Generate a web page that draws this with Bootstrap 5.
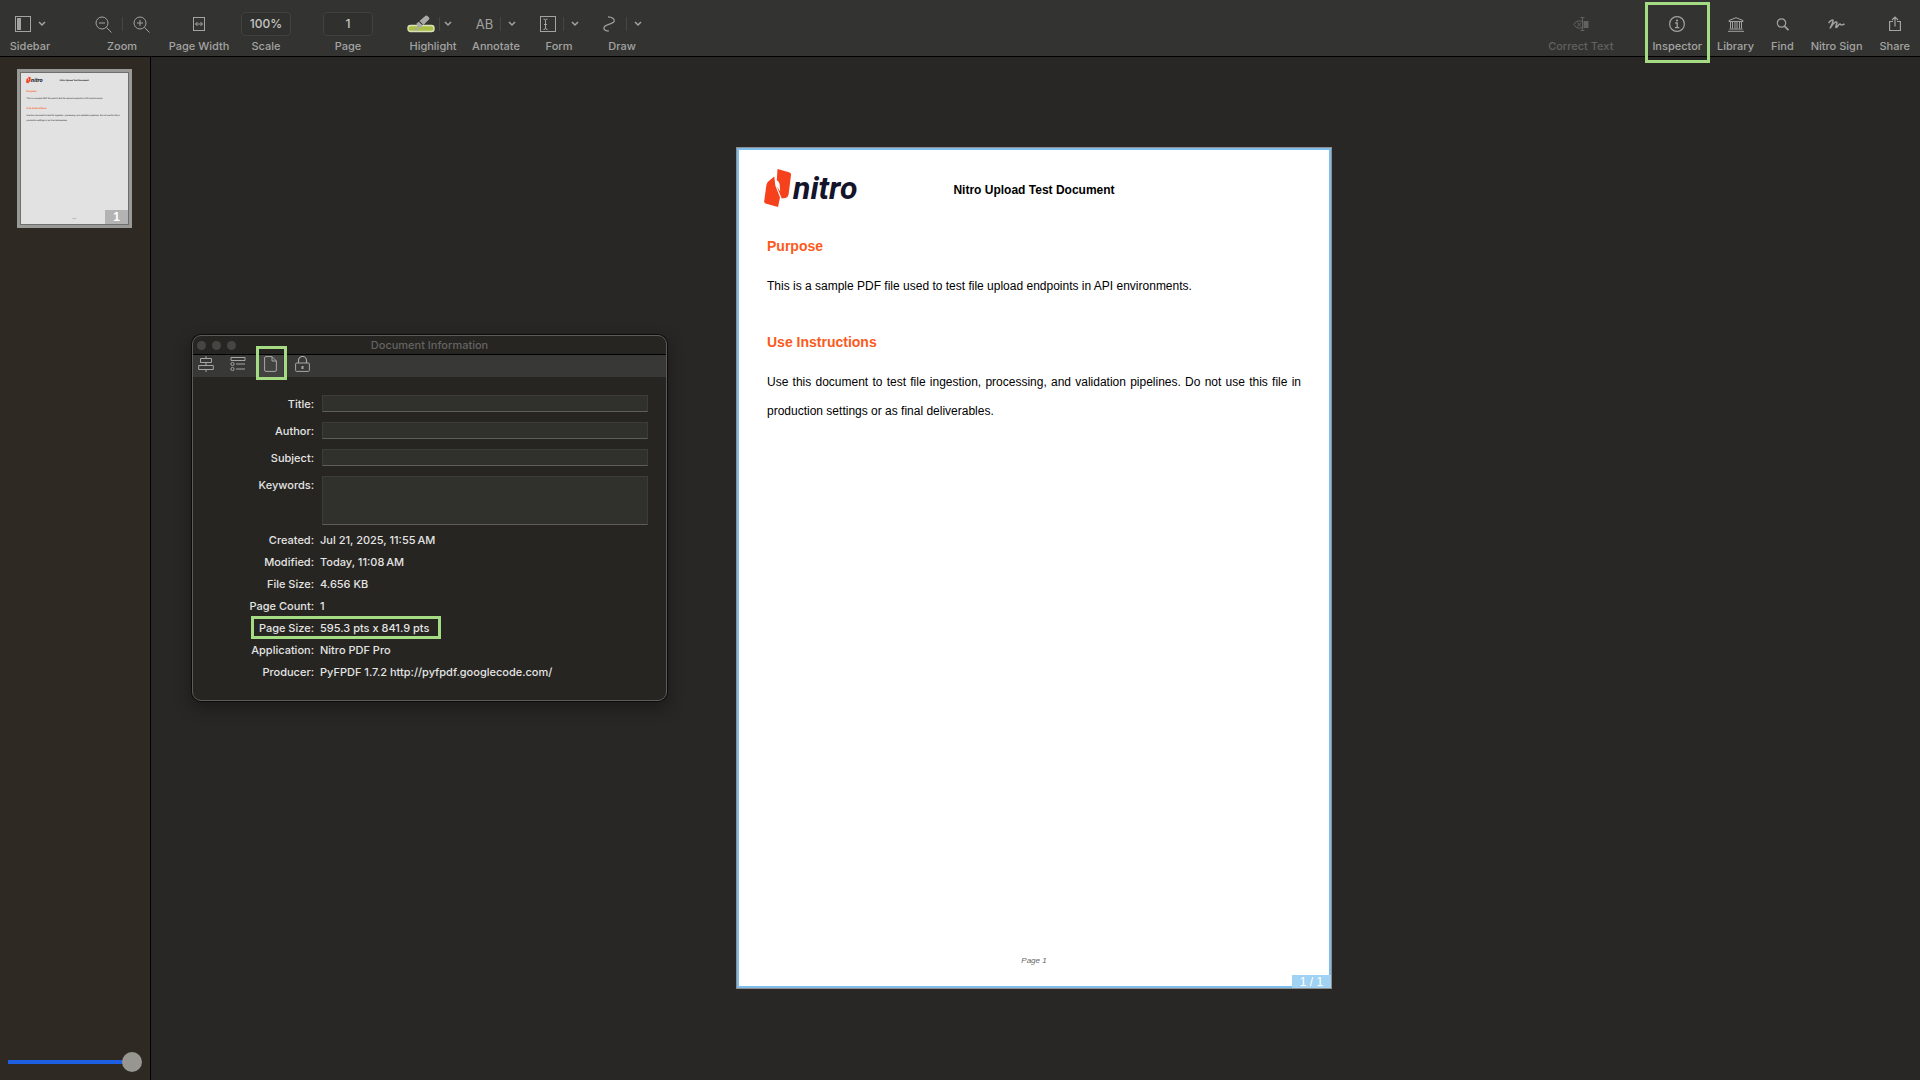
<!DOCTYPE html>
<html lang="en">
<head>
<meta charset="utf-8">
<meta name="viewport" content="width=device-width, initial-scale=1">
<title>Nitro PDF Pro</title>
<link href="https://cdn.jsdelivr.net/npm/bootstrap@5.3.0/dist/css/bootstrap.min.css" rel="stylesheet">
<style>
  :root { --mark-green: #a5db82; --ink: #a3a3a1; --page-blue: #7cbdeb; }
  body { font-family: Inter, "Noto Sans", sans-serif; font-size: 11px; line-height: 14px; background: #282725; color: #e4e4e2; }
  svg { display: block; fill: none; stroke: currentColor; }
  button { font: inherit; color: inherit; background: none; border: 0; padding: 0; }

  /* top toolbar */
  .topbar { height: 57px; background: #333331; border-bottom: 1px solid #000; color: var(--ink); font-weight: 500; padding-right: 10px; }
  .tool { display: flex; flex-direction: column; align-items: center; width: 60px; padding-top: 12px; white-space: nowrap; }
  .tool-face { display: flex; align-items: center; justify-content: center; height: 24px; gap: 7px; margin-bottom: 3px; }
  .tool-face .rule { width: 1px; height: 14px; background: #464644; }
  .tool-group { gap: 3px; }
  .tool-actions { gap: 17px; }
  .tool-sidebar { width: 60px; margin-right: 32px; }
  .tool-zoom { margin-right: 17px; }
  .tool-fit { margin-right: 7px; }
  .tool-scale { margin-right: 22px; }
  .tool-page { margin-right: 25px; }
  .tool-box { width: 50px; height: 24px; background: #30302e; border: 1px solid #41413f; border-radius: 4px; color: #c6c6c4; font-size: 12px; font-weight: 500; text-align: center; padding: 0 0 2px; }
  .ab { font-size: 13px; font-weight: 400; }
  .side { width: auto; }
  .off { color: #61615f; margin-right: 22px; }
  .marked { position: relative; }
  .marked::after { content: ""; position: absolute; border: 3px solid var(--mark-green); pointer-events: none; }
  .tool.marked { margin-right: -2px; }
  .tool.marked::after { inset: 2px -8px -7px -7px; }

  /* thumbnails */
  .thumbs { width: 151px; background: #2e2923; border-right: 1px solid #000; padding: 12px 8px 8px 17px; }
  .thumb { position: relative; width: 115px; border: 3px solid #999a98; background: #e2e2e2; }
  .thumb svg { width: 100%; border: 1px solid #6f6f6d; stroke: none; text-rendering: geometricPrecision; }
  .thumb-no { position: absolute; right: 1px; bottom: 1px; width: 23px; height: 14px; background: #b3b3b3; color: #fff; font: bold 12px/14px "Liberation Sans", Arial, sans-serif; }
  .size-slider { appearance: none; display: block; width: 134px; height: 20px; margin-left: -9px; background: linear-gradient(#1d5fe0, #1d5fe0) 0 50% / calc(100% - 10px) 4px no-repeat; border-radius: 2px; }
  .size-slider::-webkit-slider-thumb { appearance: none; width: 20px; height: 20px; border-radius: 50%; background: #989691; }

  /* document page */
  .canvas { position: relative; padding: 0 3px 2px 0; }
  .sheet { position: relative; display: flex; flex-direction: column; width: 596px; aspect-ratio: 596 / 842; background: #fff; border: 3px solid var(--page-blue); outline: 1px solid #8f8d8b; outline-offset: -1px; color: #000; font-family: "Liberation Sans", Arial, sans-serif; font-size: 12px; padding: 19px 28px 17px; }
  .sheet-head { display: grid; grid-template-columns: 1fr auto 1fr; height: 42px; align-items: center; }
  .brand { align-self: start; width: 97px; height: 38px; margin-left: -3px; stroke: none; }
  .brand text, .thumb .wordmark { font: italic bold 32px Roboto, sans-serif; fill: #14142a; }
  .sheet h1 { font-size: 12px; line-height: 20px; font-weight: bold; margin: 0; }
  .sheet h2 { font-size: 14px; line-height: 20px; font-weight: bold; color: #fb5a1c; margin: 25px 0 16px; }
  .sheet p { line-height: 29px; margin: 0; text-align: justify; }
  .sheet p + h2 { margin-top: 31px; }
  .folio { font-size: 8px; font-style: italic; line-height: 16px; color: #666; text-align: center; }
  .page-tag { position: absolute; right: -2px; bottom: -2px; width: 39px; height: 13px; background: #a0d2f3; color: #fff; font-size: 12px; line-height: 14px; text-align: center; }

  /* document information window */
  .info-window { position: absolute; left: 41px; top: 278px; width: 475px; background: #262522; border: 1px solid #5d5c5a; border-radius: 9px; box-shadow: 0 0 0 1px #0c0c0b, 0 6px 16px 2px rgba(0,0,0,.3); padding-bottom: 17px; }
  .info-title { position: relative; height: 19px; border-bottom: 1px solid #000; color: #646361; padding-left: 4px; }
  .info-title h2 { font-size: 11px; line-height: 18px; font-weight: 500; margin: 0; position: absolute; inset: 0; text-align: center; }
  .dot { width: 9px; height: 9px; border-radius: 50%; background: #464543; margin-right: 6px; }
  .info-tabs { height: 22px; background: #383837; color: #a6a6a4; gap: 6px; margin-bottom: 18px; }
  .tab-btn { width: 26px; height: 22px; display: flex; justify-content: center; padding-top: 1px; }
  .tab-btn.marked { background: #424241; }
  .tab-btn.marked::after { inset: -9px -4px -3px -1px; }
  .info-row { display: flex; font-weight: 500; }
  .info-row > :first-child { width: 121px; text-align: right; flex: none; line-height: 18px; font-weight: 500; }
  .info-row .field { flex: 1; margin: 0 18px 10px 8px; height: 17px; background: #30302d; border: 1px solid #3c3c39; border-bottom-color: #5d5d5a; border-radius: 0; color: #e4e4e2; padding: 0 4px; resize: none; min-width: 0; }
  .info-row .field.tall { height: 49px; margin-bottom: 4px; }
  .facts { margin: 0; }
  .facts .info-row > * { line-height: 22px; margin: 0; }
  .facts dd { padding-left: 6px; }
  .facts .marked::after { left: 58px; width: 190px; top: -1px; bottom: 0; }
</style>
<script src="https://cdn.jsdelivr.net/npm/bootstrap@5.3.0/dist/js/bootstrap.bundle.min.js"></script>
</head>
<body class="vh-100 d-flex flex-column overflow-hidden">

<header class="topbar d-flex flex-shrink-0">
  <button type="button" class="tool tool-sidebar">
    <span class="tool-face">
      <svg width="16" height="16"><rect x=".5" y=".5" width="15" height="15"/><rect x="2" y="2" width="4" height="12" fill="currentColor" stroke="none"/></svg>
      <svg width="8" height="6" stroke-width="1.5"><path d="M1 1l3 3 3-3"/></svg>
    </span>Sidebar
  </button>
  <div class="tool tool-zoom">
    <div class="tool-face gap-0">
      <button type="button" aria-label="Zoom out"><svg width="17" height="17"><circle cx="7" cy="7" r="6"/><path d="M4 7h6M11.5 11.5l5 5"/></svg></button>
      <span class="rule" style="margin:0 10px"></span>
      <button type="button" aria-label="Zoom in"><svg width="17" height="17"><circle cx="7" cy="7" r="6"/><path d="M4 7h6M7 4v6M11.5 11.5l5 5"/></svg></button>
    </div>Zoom
  </div>
  <button type="button" class="tool tool-fit">
    <span class="tool-face"><svg width="12" height="14"><rect x=".5" y=".5" width="11" height="13"/><path d="M2.500 7h7M4.500 5l-2 2 2 2M7.500 5l2 2-2 2"/></svg></span>Page Width
  </button>
  <div class="tool tool-scale">
    <div class="tool-face"><input class="tool-box" id="scale" type="text" value="100%"></div>
    <label for="scale">Scale</label>
  </div>
  <div class="tool tool-page">
    <div class="tool-face"><input class="tool-box" id="pageNo" type="text" value="1"></div>
    <label for="pageNo">Page</label>
  </div>
  <div class="tool-group d-flex">
    <button type="button" class="tool">
      <span class="tool-face gap-1 pe-2">
        <svg width="28" height="18"><rect x="1" y="10.500" width="26" height="6" rx="2.500" fill="#a9bf45" stroke="#dde3b8" stroke-width="1.400"/><path d="M12.500 6L18.500 .8Q19.500 0 20.500 1L22 2.500Q23 3.500 22 4.500L16.500 10zM9.500 8.500l2.300-1.800 4 4L13.500 12.500l-3 .5zM6 15l4-2 2 1-1 1.500z" fill="#a9a9a7" stroke="none"/></svg>
        <span class="rule"></span>
        <svg width="8" height="6" stroke-width="1.5"><path d="M1 1l3 3 3-3"/></svg>
      </span>Highlight
    </button>
    <button type="button" class="tool">
      <span class="tool-face"><span class="ab">AB</span><span class="rule"></span><svg width="8" height="6" stroke-width="1.5"><path d="M1 1l3 3 3-3"/></svg></span>Annotate
    </button>
    <button type="button" class="tool">
      <span class="tool-face"><svg width="16" height="16"><rect x=".5" y=".5" width="15" height="15"/><path d="M3.500 3Q5.500 3 5.500 4.500Q5.500 3 7.500 3M5.500 4v8M3.500 13.500Q5.500 13.500 5.500 12Q5.500 13.500 7.500 13.500M4 8.500h3"/></svg><span class="rule"></span><svg width="8" height="6" stroke-width="1.5"><path d="M1 1l3 3 3-3"/></svg></span>Form
    </button>
    <button type="button" class="tool">
      <span class="tool-face"><svg width="12" height="16"><path d="M5 .8C9 .8 12 3 11 5.500C10 8 2 8.500 1 11.500C.5 14 3 15 6 15" stroke-width="1.200"/></svg><span class="rule ms-1"></span><svg width="8" height="6" stroke-width="1.5"><path d="M1 1l3 3 3-3"/></svg></span>Draw
    </button>
  </div>

  <div class="tool-actions d-flex ms-auto">
    <button type="button" class="tool side off" disabled>
      <span class="tool-face"><svg width="16" height="14"><path d="M9 4H4L.700 7.500 4 11h5M4.500 5.500l3.500 4M8 5.500l-3.500 4M9.500 1v12M7.500 .5h4M7.500 13.500h4"/><rect x="10.500" y="4" width="5" height="7" fill="currentColor" stroke="none"/></svg></span>Correct Text
    </button>
    <button type="button" class="tool side marked">
      <span class="tool-face"><svg width="16" height="16"><circle cx="8" cy="8" r="7.400" stroke-width="1.200"/><circle cx="8" cy="4.500" r="1.100" fill="currentColor" stroke="none"/><path d="M6.300 7h1.900v4.500M6 11.600h4.300" stroke-width="1.300"/></svg></span>Inspector
    </button>
    <button type="button" class="tool side">
      <span class="tool-face"><svg width="16" height="15"><path d="M1 4.500v-1L8 .7l7 2.800v1zM2.500 5v6.500M4.500 5v6.500M7 5v6.500M9 5v6.500M11.500 5v6.500M13.500 5v6.500M1.500 12h13M0 14.300h16"/></svg></span>Library
    </button>
    <button type="button" class="tool side">
      <span class="tool-face"><svg width="13" height="13"><circle cx="5.500" cy="5" r="4.200" stroke-width="1.200"/><path d="M8.500 8.200l4 4" stroke-width="1.800"/></svg></span>Find
    </button>
    <button type="button" class="tool side">
      <span class="tool-face"><svg width="17" height="11"><path d="M.5 4C3 1 5.500 0 5 2C4.500 5 3 7 2 9.500C4 6 7 2.500 8.500 3C10 3.500 7 8 8 8.500C9.500 9 10.500 4.500 12 5C13 5.500 12 7 16.500 5" stroke-width="1.500"/></svg></span>Nitro Sign
    </button>
    <button type="button" class="tool side">
      <span class="tool-face"><svg width="12" height="16"><path d="M4 5.500H.6v9h10.800v-9H8M6 10.500V1.500M3 4l3-3 3 3" stroke-width="1.200"/></svg></span>Share
    </button>
  </div>
</header>

<div class="d-flex flex-grow-1">
  <aside class="thumbs d-flex flex-column justify-content-between flex-shrink-0">
    <button type="button" class="thumb" aria-label="Page 1">
      <svg viewBox="0 0 595 837" font-family="Liberation Sans, Arial, sans-serif" font-size="12">
        <use href="#nitroMark" x="28" y="20" width="27" height="38"/>
        <text class="wordmark" x="56" y="50">nitro</text>
        <text x="216" y="46" font-weight="bold" fill="#000">Nitro Upload Test Document</text>
        <g font-weight="bold" font-size="14" fill="#fb5a1c"><text x="31" y="103">Purpose</text><text x="31" y="199">Use Instructions</text></g>
        <g fill="#111"><text x="31" y="142">This is a sample PDF file used to test file upload endpoints in API environments.</text>
        <text x="31" y="238">Use this document to test file ingestion, processing, and validation pipelines. Do not use this file in</text>
        <text x="31" y="267">production settings or as final deliverables.</text></g>
        <text x="285" y="812" font-size="8" font-style="italic" fill="#666">Page 1</text>
      </svg>
      <span class="thumb-no">1</span>
    </button>
    <input type="range" class="size-slider" aria-label="Thumbnail size" min="0" max="100" value="100">
  </aside>

  <main class="canvas flex-grow-1 d-flex align-items-center justify-content-center">
    <article class="sheet">
      <div class="sheet-head">
        <svg class="brand" viewBox="0 0 97 38" role="img" aria-label="nitro">
          <symbol id="nitroMark" viewBox="0 0 27 38"><path d="M13.500 0L25 3.200Q27.200 4 27 6L24.600 25.500Q24.200 28.300 21.500 28.900L17.800 29.600L12.600 17L16.200 22.500L15.600 15Q15 12.500 12.800 11.200zM10.300 7.500L11.300 16.500L16 28.500L14 38L1.500 34.500Q0 34 .2 32L2.400 16Q3 13.500 4.500 12.200z" fill="#f5421c"/></symbol>
          <use href="#nitroMark" width="27" height="38"/>
          <text x="29" y="30">nitro</text>
        </svg>
        <h1>Nitro Upload Test Document</h1>
      </div>
      <h2>Purpose</h2>
      <p>This is a sample PDF file used to test file upload endpoints in API environments.</p>
      <h2>Use Instructions</h2>
      <p>Use this document to test file ingestion, processing, and validation pipelines. Do not use this file in production settings or as final deliverables.</p>
      <div class="folio mt-auto">Page 1</div>
      <span class="page-tag">1 / 1</span>
    </article>

    <section class="info-window" aria-labelledby="infoTitle">
      <div class="info-title d-flex align-items-center">
        <span class="dot"></span><span class="dot"></span><span class="dot"></span>
        <h2 id="infoTitle">Document Information</h2>
      </div>
      <div class="info-tabs d-flex">
        <button type="button" class="tab-btn" aria-label="Alignment"><svg width="16" height="16"><path d="M8 0v2.500M8 6.500v3M8 13.500V16M2.500 2.500h11v4h-11zM.7 9.500h14.600v4H.7z"/></svg></button>
        <button type="button" class="tab-btn" aria-label="Options"><svg width="16" height="16"><path d="M1 1.500h14v3H1zM6 8h9M6 13h9"/><circle cx="2.500" cy="8" r="1.600"/><circle cx="2.500" cy="13" r="1.600"/></svg></button>
        <button type="button" class="tab-btn marked" aria-label="Document"><svg width="13" height="16"><path d="M2 .6h6L12.400 5v9q0 1.400-1.400 1.400H2Q.6 15.400.6 14V2Q.6.6 2 .6zM8 .6V5h4.400"/></svg></button>
        <button type="button" class="tab-btn" aria-label="Security"><svg width="15" height="16"><path d="M3.500 7V4.500a4 4 0 0 1 8 0V7" stroke-width="1.200"/><rect x=".6" y="7" width="13.800" height="8.400" rx="1"/><rect x="6.500" y="10" width="2" height="3" fill="currentColor" stroke="none"/></svg></button>
      </div>
      <div class="info-row"><label for="fTitle">Title:</label><input id="fTitle" class="field" type="text"></div>
      <div class="info-row"><label for="fAuthor">Author:</label><input id="fAuthor" class="field" type="text"></div>
      <div class="info-row"><label for="fSubject">Subject:</label><input id="fSubject" class="field" type="text"></div>
      <div class="info-row"><label for="fKeys">Keywords:</label><textarea id="fKeys" class="field tall"></textarea></div>
      <dl class="facts">
        <div class="info-row"><dt>Created:</dt><dd>Jul 21, 2025, 11:55&#8239;AM</dd></div>
        <div class="info-row"><dt>Modified:</dt><dd>Today, 11:08&#8239;AM</dd></div>
        <div class="info-row"><dt>File Size:</dt><dd>4.656 KB</dd></div>
        <div class="info-row"><dt>Page Count:</dt><dd>1</dd></div>
        <div class="info-row marked"><dt>Page Size:</dt><dd>595.3 pts x 841.9 pts</dd></div>
        <div class="info-row"><dt>Application:</dt><dd>Nitro PDF Pro</dd></div>
        <div class="info-row"><dt>Producer:</dt><dd>PyFPDF 1.7.2 http://pyfpdf.googlecode.com/</dd></div>
      </dl>
    </section>
  </main>
</div>
</body>
</html>
